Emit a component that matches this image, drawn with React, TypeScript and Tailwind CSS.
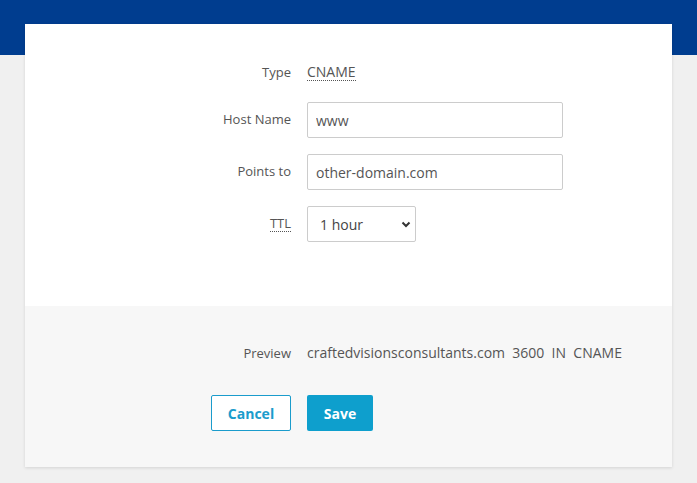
import React from 'react';

const font = { fontFamily: '"Open Sans", "Liberation Sans", sans-serif' };

const App = () => {
  return (
    <div className="min-h-[483px] w-full bg-[#f0f0f0] text-[13px] text-[#555]" style={font}>
      {/* Top bar */}
      <div className="h-[55px] bg-[#003d8f]" />

      {/* Card */}
      <div className="mx-[25px] -mt-[31px] relative bg-white shadow-[0_1px_3px_rgba(0,0,0,0.12)]">
        {/* Form section */}
        <div className="pt-[30px] pb-[64px]">
          <div className="grid grid-cols-[266px_1fr] items-center gap-y-4">
            <div className="text-right h-9 leading-9">Type</div>
            <div className="pl-4 h-9 leading-9 text-[14px]">
              <span className="text-[#555] border-b border-dotted border-[#555] leading-4 inline-block">CNAME</span>
            </div>

            <div className="text-right -mt-1">Host Name</div>
            <div className="pl-4 -mt-1">
              <input
                defaultValue="www"
                className="w-[256px] h-9 border border-[#ccc] rounded-[2px] px-2 text-[14px] text-[#555] outline-none"
                style={font}
              />
            </div>

            <div className="text-right">Points to</div>
            <div className="pl-4">
              <input
                defaultValue="other-domain.com"
                className="w-[256px] h-9 border border-[#ccc] rounded-[2px] px-2 text-[14px] text-[#555] outline-none"
                style={font}
              />
            </div>

            <div className="text-right">
              <span className="border-b border-dotted border-[#555] leading-4 inline-block">TTL</span>
            </div>
            <div className="pl-4">
              <div className="relative w-[109px] h-9">
                <select
                  defaultValue="1 hour"
                  className="appearance-none w-full h-full border border-[#ccc] rounded-[2px] pl-3 pr-6 bg-white text-[14px] text-[#444] outline-none"
                  style={font}
                >
                  <option>5 minutes</option>
                  <option>30 minutes</option>
                  <option>1 hour</option>
                  <option>1 day</option>
                </select>
                <svg
                  className="absolute right-[5px] top-[15px] pointer-events-none"
                  width="10"
                  height="7"
                  viewBox="0 0 10 7"
                >
                  <path d="M1.5 1.5 L5 5 L8.5 1.5" fill="none" stroke="#333" strokeWidth="2" />
                </svg>
              </div>
            </div>
          </div>
        </div>

        {/* Footer section */}
        <div className="bg-[#f7f7f7] pt-[29px] pb-[36px]">
          <div className="grid grid-cols-[266px_1fr] items-center gap-y-6">
            <div className="text-right h-9 leading-9">Preview</div>
            <div className="pl-4 h-9 leading-9 text-[14px] text-[#555] whitespace-pre">
              craftedvisionsconsultants.com  3600  IN  CNAME
            </div>

            <div className="flex justify-end">
              <button className="w-[80px] h-9 border border-[#1b9ccc] rounded-[2px] bg-white text-[#1b9ccc] font-bold text-[14px]">
                Cancel
              </button>
            </div>
            <div className="pl-4">
              <button className="w-[66px] h-9 rounded-[2px] bg-[#0e9fcd] text-white font-bold text-[14px]">
                Save
              </button>
            </div>
          </div>
        </div>
      </div>
    </div>
  );
};

export default App;
